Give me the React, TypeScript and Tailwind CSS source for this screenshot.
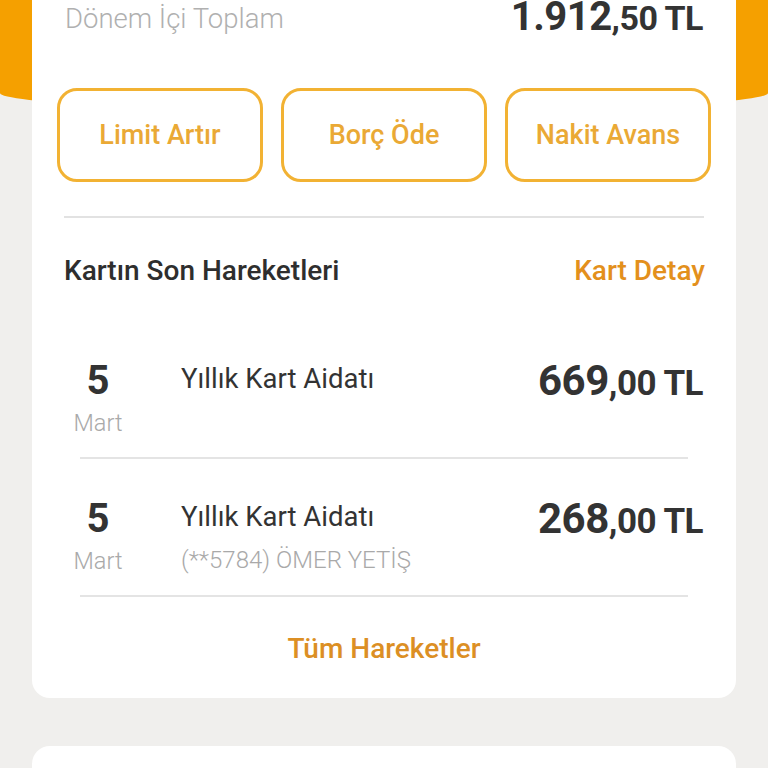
import React from 'react';

const font = { fontFamily: 'Roboto, "Noto Sans", Arial, sans-serif' };

const Amount = ({ whole, cents }: { whole: string; cents: string }) => (
  <div className="text-[#333333] font-bold whitespace-nowrap leading-[44px]">
    <span className="text-[42px] tracking-[-0.5px]">{whole}</span>
    <span className="text-[35px] tracking-[-0.5px]">,{cents} TL</span>
  </div>
);

const Movement = ({ amount, sub }: { amount: string; sub?: string }) => (
  <div className="px-12">
    <div className="flex h-[138px] border-b-2 border-[#e4e4e4]">
      <div className="w-[40px] flex flex-col items-center -ml-[2px] pt-[40px]">
        <div className="text-[40px] font-bold leading-[40px] text-[#333333]">5</div>
        <div className="text-[23.5px] font-light leading-[30px] text-[#a9a9a9] mt-[7px]">Mart</div>
      </div>
      <div className="flex-1 pl-[63px] pt-[42px]">
        <div className="text-[27.5px] leading-[32px] text-[#333333]">Yıllık Kart Aidatı</div>
        {sub && <div className="text-[24px] font-light leading-[30px] text-[#a9a9a9] mt-[12px]">{sub}</div>}
      </div>
      <div className="-mr-[15px] pt-[38px]">
        <Amount whole={amount} cents="00" />
      </div>
    </div>
  </div>
);

const App = () => {
  return (
    <div className="min-h-screen bg-[#f0efed] overflow-hidden" style={font}>
      {/* turuncu üst alan */}
      <div className="h-[111px] bg-[#f5a000] rounded-b-[50%_18px]" />

      {/* kart */}
      <div className="-mt-[111px] mx-8 bg-white rounded-b-[18px]">
        <div className="flex items-start justify-between px-[33px] h-[36px]">
          <div className="text-[27.5px] font-light leading-[28px] pt-[5px] text-[#b0b0b0]">Dönem İçi Toplam</div>
          <div className="text-[40px] leading-[40px] -mt-[3px] text-[#333333] font-bold whitespace-nowrap">
            <span className="tracking-[-0.5px]">1.912</span>
            <span className="text-[34px] tracking-[-0.5px]">,50 TL</span>
          </div>
        </div>

        <div className="grid grid-cols-3 gap-[18px] px-[25px] mt-[52px]">
          {['Limit Artır', 'Borç Öde', 'Nakit Avans'].map((t) => (
            <button
              key={t}
              className="h-[94px] rounded-[20px] border-[3px] border-[#f2b233] text-[#eaa935] text-[27px] font-medium"
            >
              {t}
            </button>
          ))}
        </div>

        <div className="mx-8 mt-[34px] border-t-2 border-[#e2e2e2]" />

        <div className="flex items-center justify-between px-8 h-[103px] pt-[3px]">
          <div className="text-[28px] font-medium text-[#2e2e2e]">Kartın Son Hareketleri</div>
          <div className="text-[28px] font-medium text-[#e3901c] -mr-[1px]">Kart Detay</div>
        </div>

        <Movement amount="669" />
        <Movement amount="268" sub="(**5784) ÖMER YETİŞ" />

        <div className="h-[101px] flex items-center justify-center pt-[3px]">
          <span className="text-[28px] font-medium text-[#dc8f24]">Tüm Hareketler</span>
        </div>
      </div>

      <div className="mx-8 mt-[48px] h-[60px] bg-white rounded-t-[18px]" />
    </div>
  );
};

export default App;
